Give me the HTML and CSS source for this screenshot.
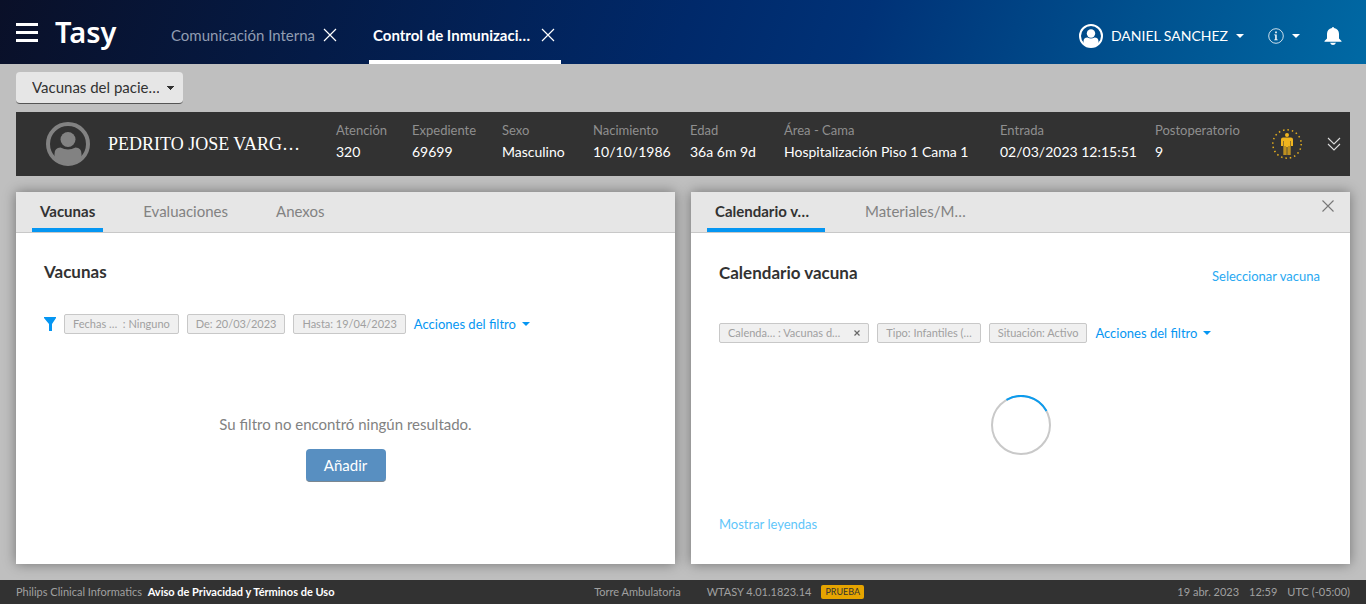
FILE: index.html
```html
<!DOCTYPE html>
<html lang="es">
<head>
<meta charset="utf-8">
<title>Tasy - Control de Inmunizaciones</title>
<link rel="stylesheet" href="styles.css">
</head>
<body>
<header class="topbar">
  <button class="icon-btn menu" aria-label="Menú"><svg width="22" height="19" viewBox="0 0 22 19" fill="#fff"><path d="M0 0h22v3H0zM0 8h22v3H0zM0 16h22v3H0z"/></svg></button>
  <a class="brand" href="#">Tasy</a>
  <nav class="apps">
    <div class="app"><a href="#">Comunicación Interna</a><button class="icon-btn" aria-label="Cerrar Comunicación Interna"><svg width="14" height="14" viewBox="0 0 14 14" fill="none" stroke="#fff" stroke-width="1.2"><path d="M1 1l12 12M13 1L1 13"/></svg></button></div>
    <div class="app current"><a href="#">Control de Inmunizaci…</a><button class="icon-btn" aria-label="Cerrar Control de Inmunizaciones"><svg width="14" height="14" viewBox="0 0 14 14" fill="none" stroke="#fff" stroke-width="1.2"><path d="M1 1l12 12M13 1L1 13"/></svg></button></div>
  </nav>
  <div class="account">
    <button class="icon-btn user"><svg width="24" height="24" viewBox="0 0 24 24"><circle cx="12" cy="12" r="11" fill="none" stroke="#fff" stroke-width="2"/><circle cx="12" cy="9.5" r="4.2" fill="#fff"/><path d="M4.5 20v-2.500q0-4 4-4 3.500 2 7 0 4 0 4 4V20Q12 25 4.500 20z" fill="#fff"/></svg><span>DANIEL SANCHEZ</span><i class="caret"></i></button>
    <button class="icon-btn info" aria-label="Información"><svg width="16" height="16" viewBox="0 0 16 16"><circle cx="8" cy="8" r="7.300" fill="none" stroke="#fff" stroke-width=".8"/><path d="M7.200 3.500h1.600v1.700H7.200zM6.200 6.500h2.500v5h1v.8H6.200v-.8h1V7.300h-1z" fill="#fff"/></svg><i class="caret"></i></button>
    <button class="icon-btn" aria-label="Notificaciones"><svg width="18" height="18" viewBox="0 0 18 18" fill="#fff"><path d="M8 1a1 1 0 0 1 2 0c3.200.5 5 2.500 5 6v4.500l2.500 2.500v.7H.5V14L3 11.500V7c0-3.500 1.800-5.500 5-6zM6 15.700h6q-1 2.300-3 2.300t-3-2.300z"/></svg></button>
  </div>
</header>
<main class="workspace">
  <select class="view-select" aria-label="Vista"><option>Vacunas del pacie…</option></select>
  <section class="patient">
    <svg class="avatar" width="44" height="44" viewBox="0 0 44 44"><circle cx="22" cy="22" r="20" fill="none" stroke="#828282" stroke-width="4"/><circle cx="22" cy="17.500" r="7.500" fill="#828282"/><path d="M8.500 36v-4q0-6.500 6-6.500 7.500 4 15 0 6 0 6 6.500v4Q22 48 8.500 36z" fill="#828282"/></svg>
    <h1>PEDRITO JOSE VARG…</h1>
    <dl class="facts">
      <div><dt>Atención</dt><dd>320</dd></div>
      <div><dt>Expediente</dt><dd>69699</dd></div>
      <div><dt>Sexo</dt><dd>Masculino</dd></div>
      <div><dt>Nacimiento</dt><dd>10/10/1986</dd></div>
      <div><dt>Edad</dt><dd>36a 6m 9d</dd></div>
      <div><dt>Área - Cama</dt><dd>Hospitalización Piso 1 Cama 1</dd></div>
      <div><dt>Entrada</dt><dd>02/03/2023 12:15:51</dd></div>
      <div><dt>Postoperatorio</dt><dd>9</dd></div>
    </dl>
    <svg class="status" width="30" height="30" viewBox="0 0 30 30"><circle cx="15" cy="15" r="14.200" fill="none" stroke="#e9b21f" stroke-width="1.500" stroke-dasharray="1.500 2.960"/><circle cx="15" cy="6" r="2" fill="#f0b51f"/><path d="M11 8.500h8q2 0 2 2V17h-2v-5h-.5v14h-3v-8h-1v8h-3V12H11v5H9v-6.500q0-2 2-2z" fill="#f0b51f"/><path d="M13 17v9M17 17v9" stroke="#ad8420" stroke-width="1.500"/></svg>
    <button class="icon-btn" aria-label="Expandir"><svg width="14" height="14" viewBox="0 0 14 14" fill="none" stroke="#ddd" stroke-width="1.100"><path d="M1 1l6 6 6-6M1 7l6 6 6-6"/></svg></button>
  </section>
  <div class="panels">
    <section class="panel">
      <nav class="tabs"><a class="tab active" href="#">Vacunas</a><a class="tab" href="#">Evaluaciones</a><a class="tab" href="#">Anexos</a></nav>
      <div class="body">
        <div class="heading"><h2>Vacunas</h2></div>
        <div class="filters">
          <svg width="12" height="14" viewBox="0 0 12 14" fill="#0596f2"><path d="M0 0h12v1L8 7v7H5V7L0 1z"/></svg>
          <span class="chip">Fechas …&nbsp; : Ninguno</span><span class="chip">De: 20/03/2023</span><span class="chip">Hasta: 19/04/2023</span>
          <button class="actions">Acciones del filtro<i class="caret"></i></button>
        </div>
        <div class="empty"><p>Su filtro no encontró ningún resultado.</p><button class="primary">Añadir</button></div>
      </div>
    </section>
    <section class="panel">
      <nav class="tabs"><a class="tab wide active" href="#">Calendario v…</a><a class="tab wide" href="#">Materiales/M…</a><button class="icon-btn close" aria-label="Cerrar panel"><svg width="12" height="12" viewBox="0 0 12 12" fill="none" stroke="#777" stroke-width="1.100"><path d="M.5.5l11 11M11.500.5l-11 11"/></svg></button></nav>
      <div class="body">
        <div class="heading tall"><h2>Calendario vacuna</h2><a href="#">Seleccionar vacuna</a></div>
        <div class="filters">
          <span class="chip">Calenda… : Vacunas d…<button class="icon-btn" aria-label="Quitar filtro"><svg width="6" height="6" viewBox="0 0 6 6" stroke="#666" stroke-width="1.200"><path d="M.5.5l5 5M5.500.5l-5 5"/></svg></button></span><span class="chip">Tipo: Infantiles (…</span><span class="chip">Situación: Activo</span>
          <button class="actions">Acciones del filtro<i class="caret"></i></button>
        </div>
        <div class="loading"><svg width="60" height="60" viewBox="0 0 60 60" fill="none" stroke-width="2" role="img" aria-label="Cargando"><circle cx="30" cy="30" r="29" stroke="#c9c9c9"/><path d="M15.500 4.900A29 29 0 0 1 55.500 16" stroke="#0b9bee"/></svg></div>
        <a class="legend" href="#">Mostrar leyendas</a>
      </div>
    </section>
  </div>
</main>
<footer class="statusbar">
  <div>Philips Clinical Informatics&nbsp; <a href="#">Aviso de Privacidad y Términos de Uso</a></div>
  <div class="version"><span>Torre Ambulatoria</span><span>WTASY 4.01.1823.14</span><span class="badge">PRUEBA</span></div>
  <div class="clock"><span>19 abr. 2023</span><span>12:59</span><span>UTC (-05:00)</span></div>
</footer>
</body>
</html>
```
FILE: styles.css
```css
* { box-sizing: border-box; }
body {
  margin: 0;
  min-height: 100vh;
  display: flex;
  flex-direction: column;
  background: #bfbfbf;
  color: #323232;
  font: 15px/20px Lato, "Liberation Sans", sans-serif;
  white-space: nowrap;
}
h1, h2, p, dl, dd { margin: 0; }
a { color: #28a9f2; text-decoration: none; }
button { font: inherit; cursor: pointer; }
svg { display: block; flex: none; }
.icon-btn {
  display: flex;
  align-items: center;
  padding: 0;
  border: 0;
  background: none;
  color: inherit;
}
.caret {
  border: 4px solid transparent;
  border-top-color: currentColor;
  border-bottom: 0;
}

.topbar {
  display: flex;
  align-items: center;
  height: 64px;
  padding: 0 24px 0 16px;
  color: #fff;
  background: linear-gradient(110deg, #0a1028 0%, #041b47 24%, #00296a 50%, #003277 63%, #00508e 82%, #0069a4 100%);
}
.brand {
  width: 64px;
  margin-left: 17px;
  color: #fff;
  font: 600 29px/32px "Noto Sans", sans-serif;
}
.apps { display: flex; align-self: stretch; margin-left: 48px; gap: 26px; }
.app {
  display: flex;
  align-items: center;
  justify-content: space-between;
  width: 176px;
  padding: 10px 6px 0 4px;
  border-bottom: 4px solid transparent;
}
.app a { color: #919db2; }
.app.current { width: 192px; border-bottom-color: #fff; }
.app.current a { color: #fff; font-weight: 700; }
.account { display: flex; align-items: center; gap: 24px; margin-left: auto; padding-top: 8px; }
.user, .info { gap: 8px; }
.user { font-size: 14px; }

.workspace {
  flex: 1;
  display: flex;
  flex-direction: column;
  padding: 8px 16px 16px;
}
.view-select {
  appearance: none;
  align-self: flex-start;
  width: 167px;
  height: 32px;
  padding: 0 24px 2px 16px;
  border: 0;
  border-bottom: 1px solid #555;
  border-radius: 4px;
  color: #323232;
  font: inherit;
  background: linear-gradient(to bottom right, #323232 50%, transparent 50%) right 8px center / 4px 4px no-repeat,
    linear-gradient(to bottom left, #323232 50%, transparent 50%) right 12px center / 4px 4px no-repeat,
    #e6e6e6;
}
.patient {
  display: flex;
  align-items: center;
  margin-top: 8px;
  height: 64px;
  padding: 0 9px 0 30px;
  background: #323232;
  color: #fff;
}
.patient h1 {
  width: 210px;
  margin: 0 18px;
  font: 18px/24px "Liberation Serif", serif;
}
.facts {
  flex: 1;
  display: grid;
  grid-template-columns: 76fr 90fr 91fr 97fr 94fr 216fr 155fr 117fr;
  padding-bottom: 4px;
  font-size: 14px;
}
.facts div { min-width: 0; }
.facts dt { line-height: 20px; color: #8f8f8f; font-size: 13px; }
.facts dd { line-height: 24px; }
.status { margin-right: 25px; }

.panels { flex: 1; display: grid; grid-template-columns: 1fr 1fr; gap: 16px; margin-top: 16px; }
.panel {
  display: flex;
  flex-direction: column;
  background: #fff;
  box-shadow: 0 0 12px rgba(0, 0, 0, .4);
}
.tabs {
  display: flex;
  gap: 32px;
  height: 40px;
  padding: 0 16px;
  background: #e6e6e6;
  box-shadow: 0 1px #c8c8c8;
}
.tab {
  height: 40px;
  padding: 9px 8px 7px;
  border-bottom: 4px solid transparent;
  color: #828282;
}
.tab.wide { width: 118px; }
.tab.active { border-bottom-color: #0596f2; color: #323232; font-weight: 700; }
.close { align-self: flex-start; margin: 8px 0 0 auto; }
.body { flex: 1; display: flex; flex-direction: column; padding: 28px 28px 30px; }
.heading { display: flex; align-items: flex-end; justify-content: space-between; height: 24px; }
.heading.tall { height: 26px; padding-right: 2px; }
.heading.tall h2 { line-height: 26px; }
.heading.tall a { line-height: 20px; font-size: 13px; }
h2 { font-size: 17px; line-height: 24px; }
.filters { display: flex; align-items: center; gap: 8px; height: 20px; margin-top: 30px; }
.heading.tall + .filters { margin-top: 37px; }
.chip {
  display: flex;
  align-items: center;
  gap: 14px;
  height: 20px;
  padding: 0 8px;
  border: 1px solid #c8c8c8;
  border-radius: 2px;
  background: #f0f0f0;
  color: #a0a0a0;
  font-size: 11px;
}
.actions {
  display: flex;
  align-items: center;
  gap: 6px;
  padding: 0;
  border: 0;
  background: none;
  color: #0596f2;
  font-size: 13px;
}
.empty {
  flex: 1;
  display: flex;
  flex-direction: column;
  align-items: center;
  justify-content: center;
  gap: 15px;
  padding-top: 28px;
  color: #828282;
}
.primary {
  width: 80px;
  height: 33px;
  border: 0;
  border-bottom: 1px solid #7b8791;
  border-radius: 4px;
  background: #588fc1;
  color: #fff;
}
.loading { flex: 1; display: grid; place-items: center; padding-bottom: 8px; }
.legend { align-self: flex-start; color: #5fc6fa; font-size: 13px; }

.statusbar {
  display: grid;
  grid-template-columns: 580fr 585fr 169fr;
  align-items: center;
  height: 24px;
  padding: 0 16px;
  background: #323232;
  color: #a0a0a0;
  font-size: 11px;
}
.statusbar a { color: #fff; font-weight: 700; }
.version, .clock { display: flex; align-items: center; gap: 10px; }
.version span:first-child { margin-right: 16px; }
.clock { justify-content: flex-end; }
.badge {
  padding: 0 4px;
  border-radius: 2px;
  background: #e6a400;
  color: #323232;
  font-size: 9px;
  line-height: 14px;
}
```
